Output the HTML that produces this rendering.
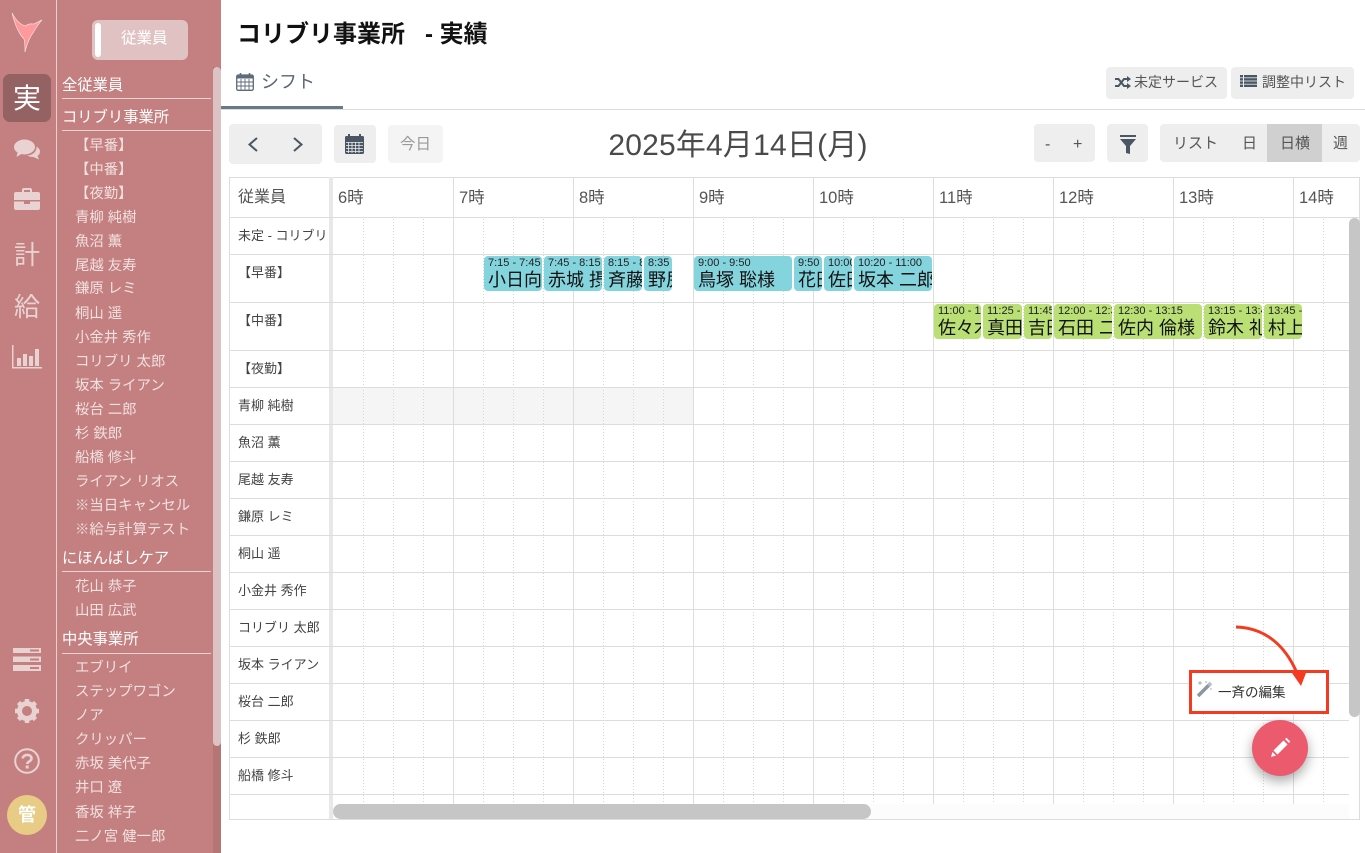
<!DOCTYPE html>
<html lang="ja"><head><meta charset="utf-8"><title>コリブリ事業所 - 実績</title>
<style>
*{box-sizing:border-box}
html,body{margin:0;padding:0;width:1365px;height:853px;overflow:hidden;background:#fff;font-family:"Liberation Sans","Noto Sans CJK JP",sans-serif;color:#444}
.a{position:absolute;white-space:nowrap}
#side{position:absolute;left:0;top:0;width:221px;height:853px;background:#c48080;overflow:hidden}
.i{position:absolute;left:75px;font-size:14.4px;line-height:24px;margin-top:1px;color:#f0e0e0;white-space:nowrap}
.h{position:absolute;left:62px;font-size:15.3px;line-height:20px;color:#fff;white-space:nowrap}
.l{position:absolute;left:62px;width:149px;height:1px;background:#e8d4d4}
.n{position:absolute;left:0;width:54px;text-align:center;font-size:26px;line-height:30px;color:#e8d2d2}
.b{position:absolute;background:#eee;border-radius:4px;color:#555}
.t{position:absolute;top:188px;font-size:16.5px;line-height:20px;color:#555}
.r{position:absolute;left:238px;font-size:13px;line-height:18px;color:#444;white-space:nowrap;width:91px;overflow:hidden}
.e{position:absolute;border-radius:4px;overflow:hidden;color:#111;padding:0 0 0 4px;white-space:nowrap}
.e s{display:block;text-decoration:none;font-size:11px;line-height:12px;margin-top:1px;color:#222}
.e b{display:block;font-weight:400;font-size:18px;line-height:22px;margin-top:0}
.bl{top:256px;height:35px;background:#84d4de}
.gr{top:304px;height:35px;background:#b9df75}
</style></head><body>

<div id="side">
<div class="a" style="left:56px;top:0;width:1px;height:853px;background:#e6d0d0"></div>
<svg class="a" style="left:0;top:0" width="56" height="60" viewBox="0 0 56 60"><path d="M12 13 C16 20 20 25 26 26 C28 23 32 24 34 24 L42 20 C38 24 36 28 33 33 C29 38 27 44 25 52 C25 46 25 42 24 39 C19 34 15 25 12 13Z" fill="#ff9a9c" stroke="#f7dede" stroke-width=".7"/></svg>
<div class="a" style="left:3px;top:74px;width:48px;height:48px;border-radius:7px;background:#946262"></div>
<div class="n" style="top:84px;color:#fff;font-size:28px;line-height:30px">実</div>
<svg class="a" style="left:14px;top:139px" width="26" height="21" viewBox="0 0 26 21" fill="#e8d2d2"><ellipse cx="10.5" cy="8" rx="10.5" ry="7.5"/><path d="M4 12 L2.5 18 L9 14Z"/><path d="M22.5 7.5 C25 9 26 11 26 12.5 C26 14.5 25 16 23.5 17 L25 20.500 L19.500 18 C17 18 14.500 17.500 13 16.500 C18 16.500 23 13 22.500 7.500Z"/></svg>
<svg class="a" style="left:14px;top:188px" width="26" height="23" viewBox="0 0 26 23" fill="#e8d2d2"><path d="M8 4 V2 Q8 0 10 0 H16 Q18 0 18 2 V4 H16 V2 H10 V4Z"/><path d="M2 4 H24 Q26 4 26 6 V12 H0 V6 Q0 4 2 4Z"/><path d="M0 13.500 H10 V16 H16 V13.500 H26 V20 Q26 22 24 22 H2 Q0 22 0 20Z"/></svg>
<div class="n" style="top:240px">計</div>
<div class="n" style="top:292px">給</div>
<svg class="a" style="left:12px;top:345px" width="30" height="24" viewBox="0 0 30 24" fill="#e8d2d2"><path d="M0 0 H1.500 V22 H30 V23.500 H0Z"/><rect x="5" y="13" width="4" height="8"/><rect x="11" y="9" width="4" height="12"/><rect x="17" y="11" width="4" height="10"/><rect x="23" y="4" width="4" height="17"/></svg>
<svg class="a" style="left:13px;top:648px" width="28" height="23" viewBox="0 0 28 23" fill="#e8d2d2"><path d="M0 0 H28 V5 H0Z M0 8.500 H28 V14 H0Z M0 17 H28 V23 H0Z"/><rect x="17" y="1.500" width="9" height="2" fill="#c48080"/><rect x="17" y="10.500" width="9" height="2" fill="#c48080"/><rect x="17" y="19" width="9" height="2" fill="#c48080"/></svg>
<svg class="a" style="left:15px;top:699px" width="24" height="24" viewBox="0 0 24 24"><circle cx="12" cy="12" r="7.500" fill="none" stroke="#e8d2d2" stroke-width="5"/><g stroke="#e8d2d2" stroke-width="4.500"><path d="M12 0V5M12 19V24M0 12H5M19 12H24M3.500 3.500L7 7M17 17L20.500 20.500M20.500 3.500L17 7M7 17L3.500 20.500"/></g></svg>
<svg class="a" style="left:14px;top:748px" width="26" height="26" viewBox="0 0 26 26"><circle cx="13" cy="13" r="11.800" fill="none" stroke="#e8d2d2" stroke-width="2"/><path d="M8.800 10.500 C9 5.800 17.500 5.800 17.500 10.500 C17.500 13.500 13.200 13.500 13.200 16" fill="none" stroke="#e8d2d2" stroke-width="2.600"/><rect x="11.700" y="17.500" width="3" height="3" fill="#e8d2d2"/></svg>
<div class="a" style="left:7px;top:795px;width:40px;height:40px;border-radius:50%;background:#e8cb84;color:#fff;font-weight:700;font-size:18px;line-height:40px;text-align:center">管</div>

<div class="a" style="left:92px;top:20px;width:96px;height:40px;border-radius:6px;background:#e0c2c2"></div>
<div class="a" style="left:95px;top:23px;width:6px;height:34px;border-radius:3px;background:#fff"></div>
<div class="a" style="left:121px;top:29px;font-size:15.5px;line-height:20px;color:#fff">従業員</div>

<div class="a" style="left:213px;top:67px;width:8px;height:786px;background:#b57575"></div>
<div class="a" style="left:213px;top:67px;width:8px;height:679px;border-radius:4px;background:#dcc2c2"></div>

<div class="h" style="top:76px">全従業員</div><div class="l" style="top:98px"></div>
<div class="h" style="top:108px">コリブリ事業所</div><div class="l" style="top:130px"></div>
<div class="i" style="left:75px;top:133px">【早番】</div>
<div class="i" style="left:75px;top:157px">【中番】</div>
<div class="i" style="left:75px;top:181px">【夜勤】</div>
<div class="i" style="top:205px">青柳 純樹</div>
<div class="i" style="top:229px">魚沼 薫</div>
<div class="i" style="top:253px">尾越 友寿</div>
<div class="i" style="top:276px">鎌原 レミ</div>
<div class="i" style="top:301px">桐山 遥</div>
<div class="i" style="top:325px">小金井 秀作</div>
<div class="i" style="top:349px">コリブリ 太郎</div>
<div class="i" style="top:373px">坂本 ライアン</div>
<div class="i" style="top:397px">桜台 二郎</div>
<div class="i" style="top:421px">杉 鉄郎</div>
<div class="i" style="top:445px">船橋 修斗</div>
<div class="i" style="top:469px">ライアン リオス</div>
<div class="i" style="top:493px">※当日キャンセル</div>
<div class="i" style="top:517px">※給与計算テスト</div>
<div class="h" style="top:549px">にほんばしケア</div><div class="l" style="top:571px"></div>
<div class="i" style="top:574px">花山 恭子</div>
<div class="i" style="top:598px">山田 広武</div>
<div class="h" style="top:630px">中央事業所</div><div class="l" style="top:653px"></div>
<div class="i" style="top:655px">エブリイ</div>
<div class="i" style="top:679px">ステップワゴン</div>
<div class="i" style="top:703px">ノア</div>
<div class="i" style="top:727px">クリッパー</div>
<div class="i" style="top:751px">赤坂 美代子</div>
<div class="i" style="top:775px">井口 遼</div>
<div class="i" style="top:800px">香坂 祥子</div>
<div class="i" style="top:824px">二ノ宮 健一郎</div>
</div>

<div class="a" style="left:237px;top:19px;font-size:24px;line-height:32px;font-weight:700;color:#111">コリブリ事業所&nbsp;&nbsp; - 実績</div>

<svg class="a" style="left:236px;top:72px" width="18" height="19" viewBox="0 0 18 19"><rect x=".7" y="3" width="16.600" height="15.300" rx="1.500" fill="none" stroke="#5d6b7a" stroke-width="1.300"/><rect x="1" y="3" width="16" height="3.500" fill="#5d6b7a"/><path d="M1 10H17M1 14H17M5 7V18M9 7V18M13 7V18" stroke="#5d6b7a" stroke-width=".9"/><path d="M4.500 1V4.500M13.500 1V4.500" stroke="#5d6b7a" stroke-width="1.600"/></svg>
<div class="a" style="left:261px;top:69px;font-size:18px;line-height:26px;color:#5a6673">シフト</div>
<div class="a" style="left:221px;top:109px;width:1144px;height:1px;background:#ddd"></div>
<div class="a" style="left:221px;top:106px;width:122px;height:3px;background:#6c7887"></div>

<div class="b" style="left:1106px;top:67px;width:121px;height:32px"></div>
<svg class="a" style="left:1115px;top:76px" width="16" height="13" viewBox="0 0 16 13"><path d="M0 3H3.500L9 10H13M0 10H3.500L9 3H13" fill="none" stroke="#4a5663" stroke-width="2"/><path d="M12 0L16 3L12 6ZM12 7L16 10L12 13Z" fill="#4a5663"/></svg>
<div class="a" style="left:1134px;top:73px;font-size:14px;line-height:18px;color:#555">未定サービス</div>
<div class="b" style="left:1231px;top:67px;width:123px;height:32px"></div>
<svg class="a" style="left:1240px;top:75px" width="17" height="12" viewBox="0 0 17 12" fill="#4a5663"><rect width="3" height="2.400"/><rect x="4" width="13" height="2.400"/><rect y="3.200" width="3" height="2.400"/><rect x="4" y="3.200" width="13" height="2.400"/><rect y="6.400" width="3" height="2.400"/><rect x="4" y="6.400" width="13" height="2.400"/><rect y="9.600" width="3" height="2.400"/><rect x="4" y="9.600" width="13" height="2.400"/></svg>
<div class="a" style="left:1262px;top:73px;font-size:14px;line-height:18px;color:#555">調整中リスト</div>

<div class="b" style="left:229px;top:124px;width:93px;height:40px"></div>
<svg class="a" style="left:246px;top:136px" width="60" height="17" viewBox="0 0 60 17"><path d="M11 2L3.500 8.500L11 15M48 2L55.500 8.500L48 15" fill="none" stroke="#4a5663" stroke-width="2"/></svg>
<div class="b" style="left:334px;top:125px;width:42px;height:38px"></div>
<svg class="a" style="left:345px;top:134px" width="19" height="20" viewBox="0 0 19 20"><rect y="2" width="19" height="18" rx="1.500" fill="#4a5663"/><path d="M4 0V3M15 0V3" stroke="#4a5663" stroke-width="2"/><path d="M1 8.500H18M1 11.500H18M1 14.500H18M1 17.500H18M3.500 8V19M7 8V19M10.500 8V19M14 8V19" stroke="#eee" stroke-width=".8"/></svg>
<div class="b" style="left:388px;top:125px;width:55px;height:38px;background:#f4f4f4"></div>
<div class="a" style="left:400px;top:135px;font-size:15.5px;line-height:20px;color:#999">今日</div>
<div class="a" style="left:599px;top:127px;width:278px;text-align:center;font-size:30px;line-height:38px;color:#4a4a4a;letter-spacing:.2px">2025年4月14日(月)</div>

<div class="b" style="left:1034px;top:124px;width:61px;height:38px"></div>
<div class="a" style="left:1045px;top:135px;font-size:16px;line-height:20px;color:#555">-</div>
<div class="a" style="left:1073px;top:135px;font-size:16px;line-height:20px;color:#555">+</div>
<div class="b" style="left:1107px;top:124px;width:41px;height:38px"></div>
<svg class="a" style="left:1120px;top:135px" width="16" height="20" viewBox="0 0 16 20"><rect width="16" height="2" fill="#4a5663"/><path d="M0 4H16L10 11V19L6 18V11Z" fill="#4a5663"/></svg>
<div class="b" style="left:1160px;top:124px;width:200px;height:38px"></div>
<div class="a" style="left:1267px;top:124px;width:55px;height:38px;background:#d0d0d0"></div>
<div class="a" style="left:1173px;top:134px;font-size:15px;line-height:20px;color:#555">リスト</div>
<div class="a" style="left:1242px;top:134px;font-size:15px;line-height:20px;color:#555">日</div>
<div class="a" style="left:1280px;top:134px;font-size:15px;line-height:20px;color:#555">日横</div>
<div class="a" style="left:1333px;top:134px;font-size:15px;line-height:20px;color:#555">週</div>

<div class="a" style="left:229px;top:177px;width:1131px;height:643px;border:1px solid #ddd"></div>
<div class="a" style="left:333px;top:388px;width:360px;height:36px;background:#f5f5f5"></div>
<div class="a" style="left:333px;top:804px;width:1016px;height:15px;background:#fcfcfc"></div>
<svg class="a" style="left:229px;top:177px" width="1131" height="643" viewBox="0 0 1131 643">
<defs><pattern id="p" x="104" y="0" width="120" height="3" patternUnits="userSpaceOnUse"><path d="M30.500 0V1M60.500 0V1M90.500 0V1" stroke="#d4d4d4"/></pattern></defs>
<rect x="104" y="41" width="1016" height="586" fill="url(#p)"/>
<rect x="100" y="0" width="4" height="642" fill="#e8e8e8"/>
<g fill="#ddd">
<rect x="224" y="0" width="1" height="627"/><rect x="344" y="0" width="1" height="627"/><rect x="464" y="0" width="1" height="627"/><rect x="584" y="0" width="1" height="627"/><rect x="704" y="0" width="1" height="627"/><rect x="824" y="0" width="1" height="627"/><rect x="944" y="0" width="1" height="627"/><rect x="1064" y="0" width="1" height="627"/>
<rect y="40" width="1131" height="1"/>
<rect y="77" width="1120" height="1"/><rect y="125" width="1120" height="1"/><rect y="173" width="1120" height="1"/><rect y="210" width="1120" height="1"/><rect y="247" width="1120" height="1"/><rect y="284" width="1120" height="1"/><rect y="321" width="1120" height="1"/><rect y="358" width="1120" height="1"/><rect y="395" width="1120" height="1"/><rect y="432" width="1120" height="1"/><rect y="469" width="1120" height="1"/><rect y="506" width="1120" height="1"/><rect y="543" width="1120" height="1"/><rect y="580" width="1120" height="1"/><rect y="617" width="1120" height="1"/>
</g></svg>

<div class="t" style="left:238px;font-size:16px">従業員</div>
<div class="t" style="left:338px">6時</div><div class="t" style="left:459px">7時</div><div class="t" style="left:579px">8時</div><div class="t" style="left:699px">9時</div><div class="t" style="left:819px">10時</div><div class="t" style="left:939px">11時</div><div class="t" style="left:1059px">12時</div><div class="t" style="left:1179px">13時</div><div class="t" style="left:1299px">14時</div>

<div class="r" style="top:227px">未定 - コリブリ</div>
<div class="r" style="top:264px;left:238px">【早番】</div>
<div class="r" style="top:312px">【中番】</div>
<div class="r" style="top:360px">【夜勤】</div>
<div class="r" style="top:397px">青柳 純樹</div>
<div class="r" style="top:434px">魚沼 薫</div>
<div class="r" style="top:471px">尾越 友寿</div>
<div class="r" style="top:508px">鎌原 レミ</div>
<div class="r" style="top:545px">桐山 遥</div>
<div class="r" style="top:582px">小金井 秀作</div>
<div class="r" style="top:619px">コリブリ 太郎</div>
<div class="r" style="top:656px">坂本 ライアン</div>
<div class="r" style="top:693px">桜台 二郎</div>
<div class="r" style="top:730px">杉 鉄郎</div>
<div class="r" style="top:767px">船橋 修斗</div>

<div class="e bl" style="left:484px;width:58px"><s>7:15 - 7:45</s><b>小日向</b></div>
<div class="e bl" style="left:544px;width:58px"><s>7:45 - 8:15</s><b>赤城 摂</b></div>
<div class="e bl" style="left:604px;width:38px"><s>8:15 - 8:35</s><b>斉藤</b></div>
<div class="e bl" style="left:644px;width:28px"><s>8:35</s><b>野尻</b></div>
<div class="e bl" style="left:694px;width:98px"><s>9:00 - 9:50</s><b>鳥塚 聡様</b></div>
<div class="e bl" style="left:794px;width:28px"><s>9:50</s><b>花田</b></div>
<div class="e bl" style="left:824px;width:28px"><s>10:00</s><b>佐田</b></div>
<div class="e bl" style="left:854px;width:78px"><s>10:20 - 11:00</s><b>坂本 二郎</b></div>
<div class="e gr" style="left:934px;width:47px"><s>11:00 - 11:25</s><b>佐々木</b></div>
<div class="e gr" style="left:983px;width:39px"><s>11:25 - 11:45</s><b>真田</b></div>
<div class="e gr" style="left:1024px;width:28px"><s>11:45</s><b>吉田</b></div>
<div class="e gr" style="left:1054px;width:58px"><s>12:00 - 12:30</s><b>石田 二</b></div>
<div class="e gr" style="left:1114px;width:88px"><s>12:30 - 13:15</s><b>佐内 倫様</b></div>
<div class="e gr" style="left:1204px;width:58px"><s>13:15 - 13:45</s><b>鈴木 礼</b></div>
<div class="e gr" style="left:1264px;width:38px"><s>13:45 - 14:05</s><b>村上</b></div>

<div class="a" style="left:1349px;top:218px;width:11px;height:499px;border-radius:6px;background:#c6c6c6"></div>
<div class="a" style="left:333px;top:804px;width:538px;height:15px;border-radius:8px;background:#c6c6c6"></div>

<div class="a" style="left:1189px;top:670px;width:140px;height:44px;background:#fff;border:3px solid #f53a22"></div>
<svg class="a" style="left:1196px;top:680px" width="18" height="18" viewBox="0 0 18 18"><path d="M2 16L14 4" stroke="#8a97a3" stroke-width="3.500"/><path d="M12.500 5.500L15 3" stroke="#b4bcc4" stroke-width="3.500"/><path d="M2 3H6M4 1V5M10 1V3M15 8V10" stroke="#a2adb6" stroke-width="1"/></svg>
<div class="a" style="left:1218px;top:684px;font-size:13.500px;line-height:18px;color:#333">一斉の編集</div>
<svg class="a" style="left:1230px;top:622px" width="80" height="70" viewBox="0 0 80 70"><path d="M6 5 C35 6 55 23 67 51" fill="none" stroke="#f53a22" stroke-width="3"/><path d="M62 51L76 51L71 64Z" fill="#f53a22"/></svg>

<div class="a" style="left:1252px;top:720px;width:56px;height:56px;border-radius:50%;background:#ec5a6e;box-shadow:0 5px 12px rgba(0,0,0,.35)"></div>
<svg class="a" style="left:1270px;top:737px" width="21" height="21" viewBox="0 0 21 21"><path d="M3.500 13.500L13.500 3.500L17.500 7.500L7.500 17.500Z M15 2L16.500 .8L20.200 4.500L19 6Z" fill="#fff"/><path d="M2.500 15L6 18.500L1 20Z" fill="#fff"/></svg>
</body></html>
